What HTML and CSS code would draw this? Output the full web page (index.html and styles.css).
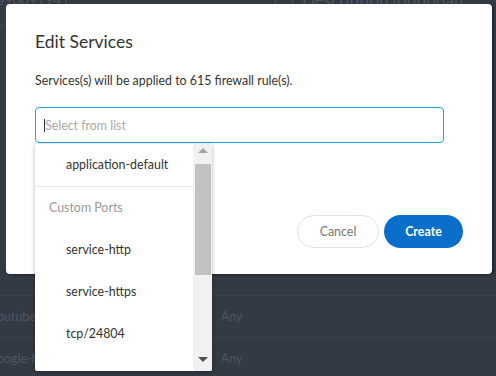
FILE: index.html
```html
<!DOCTYPE html>
<html>
<head>
<meta charset="utf-8">
<link rel="stylesheet" href="styles.css">
</head>
<body>
<div class="page">
  <div class="row row-top">
    <span class="cell-id">e90091941</span>
    <span class="field-edge"></span>
    <span class="cell-desc">Description (optional)</span>
  </div>
  <div class="spacer"></div>
  <div class="row">
    <span class="cell-name">outube</span>
    <span class="cell-any">Any</span>
  </div>
  <div class="row">
    <span class="cell-name">oogle-b</span>
    <span class="cell-any">Any</span>
  </div>
</div>

<div class="modal">
  <h1 class="title">Edit Services</h1>
  <p class="info">Services(s) will be applied to 615 firewall rule(s).</p>
  <div class="select-wrap">
    <div class="select-input"><span class="caret"></span><span class="placeholder">Select from list</span></div>
    <div class="dropdown">
      <div class="options">
        <div class="option option-first">application-default</div>
        <div class="group">Custom Ports</div>
        <div class="option">service-http</div>
        <div class="option">service-https</div>
        <div class="option">tcp/24804</div>
      </div>
      <div class="scrollbar">
        <span class="arrow-up"></span>
        <span class="thumb"></span>
        <span class="track-rest"></span>
        <span class="arrow-down"></span>
      </div>
    </div>
  </div>
  <div class="actions">
    <button class="btn btn-cancel">Cancel</button>
    <button class="btn btn-create">Create</button>
  </div>
</div>
</body>
</html>
```

FILE: styles.css
```css
* { box-sizing: border-box; }
html, body { margin: 0; padding: 0; }
body {
  width: 496px;
  height: 376px;
  overflow: hidden;
  background: #333a44;
  font-family: Lato, "Noto Sans", sans-serif;
  position: relative;
}
.page { color: #4d5560; font-size: 12.4px; }
.row {
  height: 42px;
  border-bottom: 1px solid #3b424c;
  display: flex;
  align-items: center;
}
.row-top {
  height: 26px;
  align-items: flex-start;
  border-bottom: 1px solid #3d444e;
}
.cell-id { margin-left: -3px; margin-top: -9px; width: 278px; font-size: 14px; }
.field-edge {
  width: 18px; height: 8px;
  border-left: 1px solid #4a525c;
  border-right: 1px solid #4a525c;
}
.cell-desc { margin-left: 9px; margin-top: -11px; font-size: 17px; }
.spacer { height: 270px; border-bottom: 1px solid #3b424c; }
.cell-name { width: 224px; margin-left: -3px; }

.modal {
  position: absolute;
  left: 6px;
  top: 4px;
  width: 486px;
  height: 270px;
  background: #fff;
  border-radius: 4px;
  padding: 0 29px;
  box-shadow: 2px 1px 2px rgba(0,0,0,0.35);
}
.title {
  margin: 26px 0 0;
  font-size: 17.5px;
  font-weight: 400;
  line-height: 24px;
  color: #333;
}
.info {
  margin: 18px 0 0;
  font-size: 12.4px;
  line-height: 18px;
  color: #333;
}
.select-wrap { position: relative; margin-top: 17px; width: 409px; }
.select-input {
  height: 36px;
  border: 1px solid #1ea0e6;
  border-radius: 4px;
  padding-left: 8px;
  display: flex;
  align-items: center;
  font-size: 12.4px;
}
.caret { width: 1px; height: 13px; background: #333; }
.placeholder { color: #a8a8a8; }

.dropdown {
  position: absolute;
  left: 0;
  top: 37px;
  width: 177px;
  height: 227px;
  background: #fff;
  display: flex;
  box-shadow: 0 1px 4px rgba(0,0,0,0.3);
  border-radius: 0 0 2px 2px;
  overflow: hidden;
  z-index: 2;
}
.options { flex: 1; overflow: hidden; font-size: 12.4px; color: #333; }
.option {
  height: 42px;
  line-height: 42px;
  padding-left: 31px;
  white-space: nowrap;
}
.option-first { height: 43px; border-bottom: 1px solid #e6e6e6; }
.group {
  height: 42px;
  line-height: 42px;
  padding-left: 14px;
  color: #999;
}
.scrollbar {
  width: 19px;
  background: #f1f1f1;
  display: flex;
  flex-direction: column;
  align-items: center;
}
.arrow-up {
  margin-top: 4px;
  width: 0; height: 0;
  border-left: 5px solid transparent;
  border-right: 5px solid transparent;
  border-bottom: 5px solid #a3a3a3;
}
.thumb {
  margin-top: 11px;
  width: 16px;
  height: 111px;
  background: #c1c1c1;
}
.track-rest { flex: 1; }
.arrow-down {
  margin-bottom: 9px;
  width: 0; height: 0;
  border-left: 5px solid transparent;
  border-right: 5px solid transparent;
  border-top: 5px solid #505050;
}

.actions {
  display: flex;
  justify-content: flex-end;
  gap: 5px;
  margin-top: 72px;
}
.btn {
  height: 33px;
  border-radius: 17px;
  font-family: Lato, "Noto Sans", sans-serif;
  font-size: 12.4px;
  cursor: pointer;
}
.btn-cancel {
  width: 82px;
  background: #fff;
  border: 1px solid #dce2e7;
  color: #777;
}
.btn-create {
  width: 79px;
  background: #0a6fcb;
  border: none;
  color: #fff;
  font-weight: 700;
}
```
